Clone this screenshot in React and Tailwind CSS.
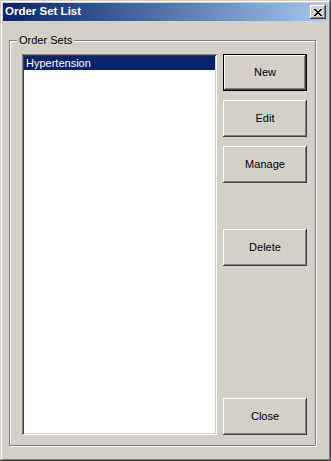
const buttons = [
  { id: 'new', label: 'New', isDefault: true, className: '' },
  { id: 'edit', label: 'Edit', className: 'mt-[9px]' },
  { id: 'manage', label: 'Manage', className: 'mt-[9px]' },
  { id: 'delete', label: 'Delete', className: 'mt-[46px]' },
  { id: 'close', label: 'Close', className: 'mt-auto' },
];

const raised =
  'shadow-[inset_-1px_-1px_#404040,inset_1px_1px_#ffffff,inset_-2px_-2px_#808080,inset_2px_2px_#d4d0c8]';
const raisedDefault =
  'border border-black shadow-[inset_-1px_-1px_#404040,inset_1px_1px_#ffffff,inset_-2px_-2px_#808080,inset_2px_2px_#d4d0c8]';

const WinButton = ({ label, isDefault, className }) => (
  <button
    type="button"
    className={`h-[37px] w-[84px] bg-[#d4d0c8] text-[11px] text-black flex items-center justify-center ${
      isDefault ? raisedDefault : raised
    } ${className}`}
  >
    {label}
  </button>
);

export default function App() {
  return (
    <div
      className="w-[331px] h-[461px] bg-[#d4d0c8] p-[3px] flex flex-col shadow-[inset_-1px_-1px_#404040,inset_1px_1px_#d4d0c8,inset_-2px_-2px_#808080,inset_2px_2px_#ffffff]"
      style={{ fontFamily: '"Liberation Sans", Arial, sans-serif' }}
    >
      {/* title bar */}
      <div className="h-[18px] flex items-center pl-[2px] pr-[2px] bg-gradient-to-r from-[#0a246a] to-[#a6caf0]">
        <span className="text-white font-bold text-[11.5px] leading-none">Order Set List</span>
        <button
          type="button"
          className={`ml-auto w-[16px] h-[14px] bg-[#d4d0c8] flex items-center justify-center ${raised}`}
        >
          <svg width="8" height="7" viewBox="0 0 8 7" shapeRendering="crispEdges">
            <path
              fill="#000"
              d="M0 0h2v1h-2zM6 0h2v1h-2zM1 1h2v1h-2zM5 1h2v1h-2zM2 2h4v1h-4zM3 3h2v1h-2zM2 4h4v1h-4zM1 5h2v1h-2zM5 5h2v1h-2zM0 6h2v1h-2zM6 6h2v1h-2z"
            />
          </svg>
        </button>
      </div>

      {/* group box */}
      <div className="relative ml-[6px] mt-[19px] w-[307px] h-[406px] border border-[#808080] shadow-[inset_1px_1px_#ffffff,1px_1px_#ffffff] flex pl-[12px] pt-[13px]">
        <span className="absolute left-[7px] top-[-8px] px-[2px] bg-[#d4d0c8] text-[11px] leading-[14px] text-black">
          Order Sets
        </span>

        {/* list box */}
        <div className="w-[195px] h-[381px] bg-white p-[2px] shadow-[inset_1px_1px_#808080,inset_-1px_-1px_#ffffff,inset_2px_2px_#404040,inset_-2px_-2px_#d4d0c8]">
          <div className="h-[14px] bg-[#0a246a] text-white text-[11px] leading-[14px] pl-[2px]">
            Hypertension
          </div>
        </div>

        {/* buttons */}
        <div className="ml-[6px] h-[381px] flex flex-col">
          {buttons.map((b) => (
            <WinButton key={b.id} label={b.label} isDefault={b.isDefault} className={b.className} />
          ))}
        </div>
      </div>
    </div>
  );
}
